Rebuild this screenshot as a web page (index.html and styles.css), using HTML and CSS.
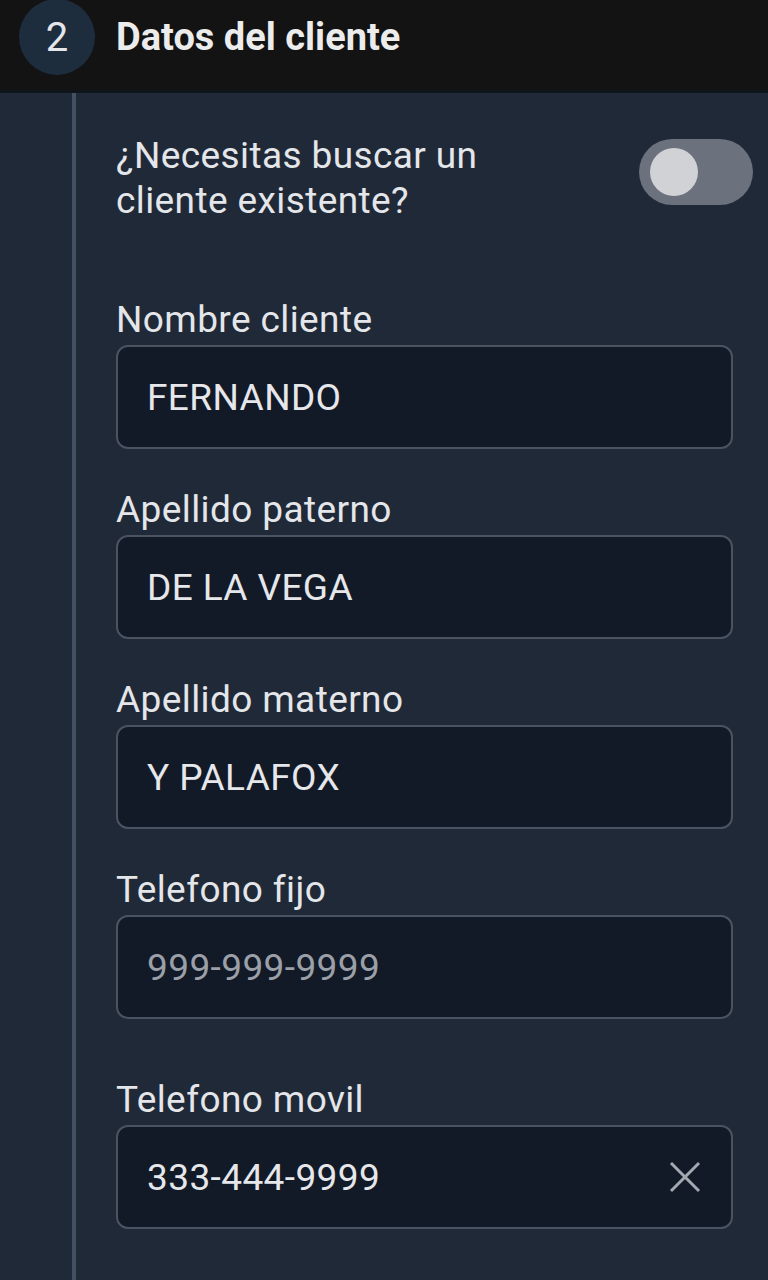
FILE: index.html
```html
<!DOCTYPE html>
<html lang="es">
<head>
<meta charset="utf-8">
<title>Datos del cliente</title>
<link rel="stylesheet" href="styles.css">
</head>
<body>
<header class="step-header">
  <div class="step-num">2</div>
  <h1 class="step-title">Datos del cliente</h1>
</header>
<main class="step-body">
  <div class="rail"></div>
  <form class="form">
    <div class="search-row">
      <p class="question">¿Necesitas buscar un<br>cliente existente?</p>
      <div class="toggle"><span class="knob"></span></div>
    </div>
    <div class="field">
      <label class="label">Nombre cliente</label>
      <div class="input"><span class="value">FERNANDO</span></div>
    </div>
    <div class="field">
      <label class="label">Apellido paterno</label>
      <div class="input"><span class="value">DE LA VEGA</span></div>
    </div>
    <div class="field">
      <label class="label">Apellido materno</label>
      <div class="input"><span class="value">Y PALAFOX</span></div>
    </div>
    <div class="field field-spaced">
      <label class="label">Telefono fijo</label>
      <div class="input"><span class="placeholder">999-999-9999</span></div>
    </div>
    <div class="field">
      <label class="label">Telefono movil</label>
      <div class="input"><span class="value">333-444-9999</span>
        <svg class="clear" width="32" height="32" viewBox="0 0 32 32"><path d="M2 2 L30 30 M30 2 L2 30" stroke="#a3a8b1" stroke-width="3" fill="none"/></svg>
      </div>
    </div>
  </form>
</main>
</body>
</html>
```
FILE: styles.css
```css
html, body {
  margin: 0;
  padding: 0;
}
body {
  background: #202937;
  font-family: Roboto, "Noto Sans", sans-serif;
  color: #e4e6ea;
  height: 1280px;
  overflow: hidden;
}
.step-header {
  height: 90px;
  background: #131313;
  border-bottom: 3px solid #0f151d;
  display: flex;
  align-items: flex-start;
  padding-left: 19px;
  box-sizing: content-box;
}
.step-num {
  width: 76px;
  height: 76px;
  margin-top: -1px;
  border-radius: 50%;
  background: #1e2d3e;
  display: flex;
  align-items: center;
  justify-content: center;
  font-size: 40px;
  color: #e4e6ea;
}
.step-title {
  margin: 0 0 0 21px;
  height: 74px;
  display: flex;
  align-items: center;
  font-size: 38px;
  font-weight: 700;
  color: #ececec;
}
.step-body {
  display: flex;
  min-height: 1187px;
}
.rail {
  width: 4px;
  margin-left: 72px;
  background: #435063;
}
.form {
  flex: 1;
  padding: 40px 35px 0 40px;
}
.search-row {
  display: flex;
  justify-content: space-between;
  align-items: flex-start;
  margin-right: -20px;
  margin-bottom: 77px;
}
.question {
  margin: 0;
  font-size: 37px;
  line-height: 45px;
  letter-spacing: 0.4px;
}
.toggle {
  width: 114px;
  height: 66px;
  margin-top: 6px;
  border-radius: 33px;
  background: #6b717d;
  display: flex;
  align-items: center;
  padding-left: 11px;
  box-sizing: border-box;
}
.knob {
  width: 48px;
  height: 48px;
  border-radius: 50%;
  background: #d0d2d6;
}
.field {
  display: flex;
  flex-direction: column;
  gap: 5px;
  margin-bottom: 41px;
}
.field-spaced {
  margin-bottom: 61px;
}
.label {
  font-size: 37px;
  line-height: 40px;
  letter-spacing: 0.4px;
}
.input {
  height: 104px;
  box-sizing: border-box;
  border: 2px solid #4a5362;
  border-radius: 12px;
  background: #121927;
  display: flex;
  align-items: center;
  justify-content: space-between;
  padding: 0 30px 0 29px;
  font-size: 37px;
  letter-spacing: 0.4px;
}
.value {
  color: #e6e7ea;
}
.placeholder {
  color: #9ba0a8;
}
.clear {
  display: block;
}
```
